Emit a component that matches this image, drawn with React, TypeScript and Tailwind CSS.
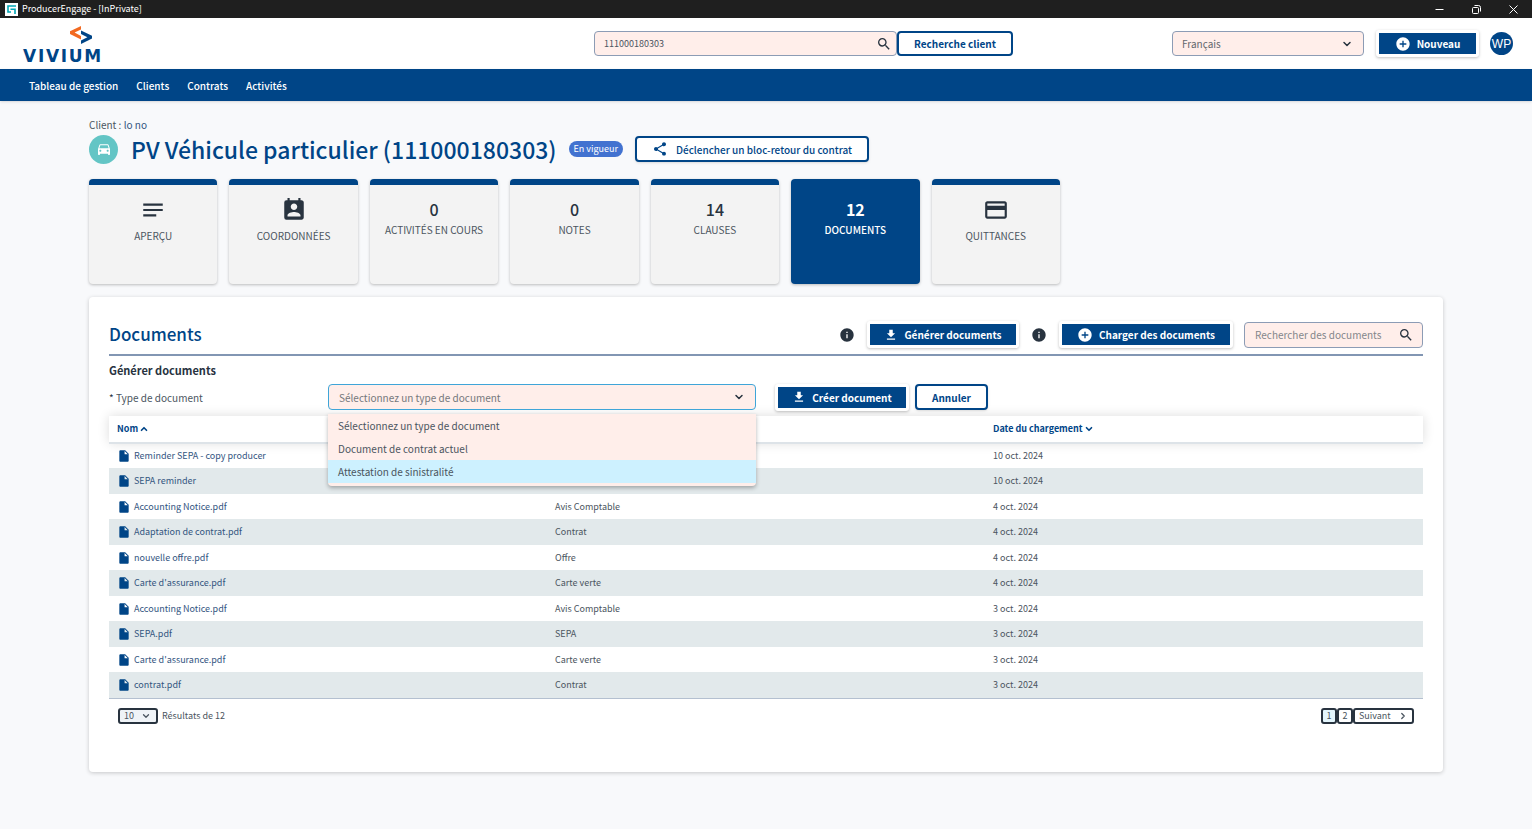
import React, { useState } from 'react';
import { ChevronDown, ChevronRight, ChevronUp } from 'lucide-react';
import {
  MdAddCircle,
  MdCreditCard,
  MdDirectionsCar,
  MdFileDownload,
  MdInfo,
  MdInsertDriveFile,
  MdNotes,
  MdPermContactCalendar,
  MdSearch,
  MdShare,
} from 'react-icons/md';

interface TileProps {
  label: string;
  count?: number;
  icon?: React.ReactNode;
  active?: boolean;
}

interface DocumentRow {
  name: string;
  type: string;
  date: string;
}

const navLinks = ['Tableau de gestion', 'Clients', 'Contrats', 'Activités'];

const tiles: TileProps[] = [
  { label: 'Aperçu', icon: <MdNotes /> },
  { label: 'Coordonnées', icon: <MdPermContactCalendar /> },
  { label: 'Activités en cours', count: 0 },
  { label: 'Notes', count: 0 },
  { label: 'Clauses', count: 14 },
  { label: 'Documents', count: 12, active: true },
  { label: 'Quittances', icon: <MdCreditCard /> },
];

const documents: DocumentRow[] = [
  { name: 'Reminder SEPA - copy producer', type: '', date: '10 oct. 2024' },
  { name: 'SEPA reminder', type: '', date: '10 oct. 2024' },
  { name: 'Accounting Notice.pdf', type: 'Avis Comptable', date: '4 oct. 2024' },
  { name: 'Adaptation de contrat.pdf', type: 'Contrat', date: '4 oct. 2024' },
  { name: 'nouvelle offre.pdf', type: 'Offre', date: '4 oct. 2024' },
  { name: "Carte d'assurance.pdf", type: 'Carte verte', date: '4 oct. 2024' },
  { name: 'Accounting Notice.pdf', type: 'Avis Comptable', date: '3 oct. 2024' },
  { name: 'SEPA.pdf', type: 'SEPA', date: '3 oct. 2024' },
  { name: "Carte d'assurance.pdf", type: 'Carte verte', date: '3 oct. 2024' },
  { name: 'contrat.pdf', type: 'Contrat', date: '3 oct. 2024' },
];

const documentTypes = ['Sélectionnez un type de document', 'Document de contrat actuel', 'Attestation de sinistralité'];

const TitleBar: React.FC = () => (
  <div className="flex h-[18px] items-center bg-[#1f1f1f] pl-[5px] text-white">
    <svg viewBox="0 0 13 13" className="h-[13px] w-[13px]" aria-hidden="true">
      <rect width="13" height="13" fill="#fff" />
      <path d="M11 3H3v6h3M5.5 6.2H10V11" fill="none" stroke="#00a5b5" strokeWidth="1.6" />
    </svg>
    <span className="ml-1 text-[9px]">ProducerEngage - [InPrivate]</span>
    <div className="ml-auto flex items-center gap-7 pr-[14px]">
      <button aria-label="Réduire">
        <svg viewBox="0 0 9 9" className="h-[9px] w-[9px]" stroke="#fff">
          <path d="M0.5 4.5h8" />
        </svg>
      </button>
      <button aria-label="Restaurer">
        <svg viewBox="0 0 9 9" className="h-[9px] w-[9px]" fill="none" stroke="#fff">
          <rect x="0.5" y="2.5" width="6" height="6" rx="1" />
          <path d="M2.5 0.5h4a2 2 0 0 1 2 2v4" />
        </svg>
      </button>
      <button aria-label="Fermer">
        <svg viewBox="0 0 9 9" className="h-[9px] w-[9px]" stroke="#fff">
          <path d="M0.5 0.5l8 8M8.5 0.5l-8 8" />
        </svg>
      </button>
    </div>
  </div>
);

const Logo: React.FC = () => (
  <a href="#" className="flex w-[84px] flex-col items-center gap-1 pt-[3px] text-[#004587]">
    <svg viewBox="0 0 22 18" className="ml-9 h-[18px] w-[22px]" aria-hidden="true">
      <path d="M11 0v3.6L4.6 6.6 11 10v3.4L0 8V5.2z" fill="#f26a21" />
      <path d="M11 4.6l11 5.2v2.8L11 18v-3.6l6.4-3.2L11 8z" fill="#004587" />
    </svg>
    <span className="font-['DejaVu_Sans'] text-[17px] leading-4 font-bold tracking-widest">VIVIUM</span>
  </a>
);

const SolidButton: React.FC<{ icon: React.ReactNode; children: React.ReactNode; className?: string }> = ({
  icon,
  children,
  className = '',
}) => (
  <button
    className={`flex h-[27px] items-center justify-center gap-[6px] rounded-[3px] border-3 border-white bg-[#004587] text-[10px] font-bold text-white shadow-[0_1px_3px_rgba(0,0,0,0.25)] ${className}`}
  >
    {icon}
    {children}
  </button>
);

const Tile: React.FC<TileProps> = ({ label, count, icon, active }) => (
  <button
    className={`flex h-[105px] flex-col items-center rounded border-t-[6px] border-[#004587] shadow-[0_1px_3px_rgba(0,0,0,0.25)] ${
      active ? 'bg-[#004587] text-white' : 'bg-[#f3f3f3] text-[#28333f]'
    }`}
  >
    {icon ? (
      <span className="mt-3 text-[26px]">{icon}</span>
    ) : (
      <span className={`mt-3 text-base leading-6 ${active ? 'font-bold' : 'font-medium'}`}>{count}</span>
    )}
    <span className={`text-[10px] leading-[18px] uppercase ${icon ? 'mt-1' : ''} ${active ? 'font-medium' : 'text-[#4b5560]'}`}>
      {label}
    </span>
  </button>
);

const DocumentTypeSelect: React.FC = () => {
  const [value, setValue] = useState(documentTypes[0]);
  return (
    <div className="relative w-[428px]">
      <select
        id="document-type"
        value={value}
        onChange={(e) => setValue(e.target.value)}
        className="block h-[26px] w-full appearance-none rounded border border-[#3fa5d8] bg-[#ffeeea] px-[10px] text-[10px] text-[#75787c]"
      >
        {documentTypes.map((type) => (
          <option key={type}>{type}</option>
        ))}
      </select>
      <ChevronDown size={12} strokeWidth={3} className="pointer-events-none absolute top-[7px] right-[11px] text-[#28333f]" />
      <ul
        role="listbox"
        aria-label="Type de document"
        className="absolute top-[30px] left-0 z-10 w-full rounded-b bg-[#ffeeea] pb-[3px] text-[10px] text-[#4b5560] shadow-[0_2px_4px_rgba(0,0,0,0.3)]"
      >
        {documentTypes.map((type, i) => (
          <li
            key={type}
            role="option"
            aria-selected={type === value}
            className={`px-[10px] leading-[23px] ${i === 2 ? 'bg-[#cdf1ff]' : ''}`}
          >
            {type}
          </li>
        ))}
      </ul>
    </div>
  );
};

const DocumentsTable: React.FC = () => (
  <table className="w-full table-fixed border-b border-[#b4c0d0] text-left">
    <thead className="shadow-[0_0_12px_rgba(0,0,0,0.14)]">
      <tr className="h-[27px] border-b-2 border-[#dde3e8] bg-white text-[9px] text-[#004587]">
        <th className="px-2 font-bold">
          <button className="flex items-center gap-px">
            Nom <ChevronUp size={10} strokeWidth={4} />
          </button>
        </th>
        <th aria-label="Type"></th>
        <th className="px-2 font-bold">
          <button className="flex items-center gap-px">
            Date du chargement <ChevronDown size={10} strokeWidth={4} />
          </button>
        </th>
      </tr>
    </thead>
    <tbody>
      {documents.map((doc, i) => (
        <tr key={i} className="text-[9px] leading-4 text-[#4b5560] odd:h-[25px] even:h-[26px] even:bg-[#e2e9eb]">
          <td className="px-2">
            <a href="#" className="flex items-center gap-[3px] text-[#33557f]">
              <MdInsertDriveFile className="text-sm text-[#004587]" />
              {doc.name}
            </a>
          </td>
          <td className="px-2">{doc.type}</td>
          <td className="px-2">{doc.date}</td>
        </tr>
      ))}
    </tbody>
  </table>
);

const App: React.FC = () => {
  const [query, setQuery] = useState('111000180303');
  return (
    <div className="min-h-screen bg-[#f8f9fb] font-['Noto_Sans_CJK_SC',sans-serif] text-[#28333f]">
      <TitleBar />
      <header className="flex h-[51px] items-center bg-white pr-[19px] pl-[21px]">
        <Logo />
        <form className="ml-auto flex items-center" role="search">
          <div className="relative w-[303px]">
            <input
              aria-label="Recherche client"
              value={query}
              onChange={(e) => setQuery(e.target.value)}
              className="block h-[25px] w-full rounded border border-[#8c9cb5] bg-[#ffeeea] px-[9px] text-[9px] text-[#4b5560]"
            />
            <MdSearch className="absolute top-[5px] right-[5px] text-base" />
          </div>
          <button className="h-[25px] w-[116px] rounded-sm border-2 border-[#004587] bg-white text-[10px] font-bold text-[#004587]">
            Recherche client
          </button>
        </form>
        <div className="ml-[159px] flex items-center">
          <div className="relative w-48">
            <select
              aria-label="Langue"
              className="block h-[25px] w-full appearance-none rounded border border-[#8c9cb5] bg-[#ffeeea] px-[9px] text-[10px] text-[#63676d]"
            >
              <option>Français</option>
              <option>Nederlands</option>
            </select>
            <ChevronDown size={12} strokeWidth={3} className="pointer-events-none absolute top-[7px] right-[11px]" />
          </div>
          <SolidButton className="ml-3 w-[103px]" icon={<MdAddCircle className="text-base" />}>
            Nouveau
          </SolidButton>
          <div className="ml-[11px] flex h-[23px] w-[23px] items-center justify-center rounded-full bg-[#004587] font-['Liberation_Sans'] text-xs text-white">
            WP
          </div>
        </div>
      </header>
      <nav className="flex h-8 items-center gap-[18px] bg-[#004587] pl-[29px] text-[10px] font-medium text-white shadow">
        {navLinks.map((link) => (
          <a key={link} href="#">
            {link}
          </a>
        ))}
      </nav>

      <main className="px-[89px] pt-4 pb-14">
        <p className="text-[10px] leading-4 text-[#4b5560]">
          Client :{' '}
          <a href="#" className="text-[#33557f]">
            lo no
          </a>
        </p>
        <div className="flex h-8 items-center">
          <div className="flex h-[29px] w-[29px] items-center justify-center rounded-full bg-[#63c5c5] text-white">
            <MdDirectionsCar className="text-base" />
          </div>
          <h1 className="ml-[13px] text-[23px] font-medium text-[#004587]">PV Véhicule particulier (111000180303)</h1>
          <span className="ml-3 rounded-full bg-[#4272d0] px-[5px] text-[9px] leading-4 text-white">En vigueur</span>
          <button className="ml-3 flex h-[26px] w-[234px] items-center justify-center gap-2 rounded-sm border-2 border-[#004587] bg-white text-[10px] font-medium text-[#004587] shadow">
            <MdShare className="text-base" />
            Déclencher un bloc-retour du contrat
          </button>
        </div>

        <div className="mt-[14px] grid w-full max-w-[971px] grid-cols-7 gap-3">
          {tiles.map((tile) => (
            <Tile key={tile.label} {...tile} />
          ))}
        </div>

        <section className="mt-[13px] rounded bg-white px-5 pt-6 pb-12 shadow-[0_1px_4px_rgba(0,0,0,0.2)]">
          <div className="flex items-center border-b-2 border-[#8296b3] pb-[6px]">
            <h2 className="self-start text-[17px] leading-[26px] font-medium text-[#004587]">Documents</h2>
            <MdInfo className="ml-auto text-base" />
            <SolidButton className="ml-3 w-[152px]" icon={<MdFileDownload className="text-sm" />}>
              Générer documents
            </SolidButton>
            <MdInfo className="ml-3 text-base" />
            <SolidButton className="ml-3 w-[174px]" icon={<MdAddCircle className="text-base" />}>
              Charger des documents
            </SolidButton>
            <div className="relative ml-[11px] w-[179px]">
              <input
                aria-label="Rechercher des documents"
                placeholder="Rechercher des documents"
                className="block h-[26px] w-full rounded border border-[#8c9cb5] bg-[#ffeeea] px-[10px] text-[10px] placeholder:text-[#83868a]"
              />
              <MdSearch className="absolute top-[5px] right-[9px] text-base" />
            </div>
          </div>

          <h3 className="mt-[6px] text-[11px] leading-4 font-bold">Générer documents</h3>
          <div className="my-[6px] flex h-[26px] items-center">
            <label htmlFor="document-type" className="w-[219px] text-[10px] text-[#4b5560]">
              <span className="text-[#28333f]">*</span> Type de document
            </label>
            <DocumentTypeSelect />
            <SolidButton className="ml-[19px] w-[134px]" icon={<MdFileDownload className="text-sm" />}>
              Créer document
            </SolidButton>
            <button className="ml-[6px] h-[26px] w-[73px] rounded-sm border-2 border-[#004587] bg-white text-[10px] font-bold text-[#004587] shadow">
              Annuler
            </button>
          </div>

          <DocumentsTable />

          <div className="mt-[9px] flex items-center justify-between px-[9px] text-[9px] text-[#4b5560]">
            <div className="flex items-center gap-1">
              <div className="relative">
                <select
                  id="page-size"
                  className="block h-4 w-10 appearance-none rounded-[3px] border-2 border-[#28333f] bg-[#eff3f7] pl-1 text-[9px] leading-3"
                >
                  <option>10</option>
                  <option>20</option>
                </select>
                <ChevronDown size={10} strokeWidth={3} className="pointer-events-none absolute top-[3px] right-[7px]" />
              </div>
              <label htmlFor="page-size">Résultats de 12</label>
            </div>
            <div className="flex">
              <button className="h-4 w-4 rounded-[3px] border-2 border-[#28333f] bg-[#e4f6fd] leading-3">1</button>
              <button className="h-4 w-4 rounded-[3px] border-2 border-[#28333f] leading-3">2</button>
              <button className="flex h-4 w-[61px] items-center justify-between rounded-[3px] border-2 border-[#28333f] px-1 leading-3">
                Suivant <ChevronRight size={10} strokeWidth={3} />
              </button>
            </div>
          </div>
        </section>
      </main>
    </div>
  );
};

export default App;
